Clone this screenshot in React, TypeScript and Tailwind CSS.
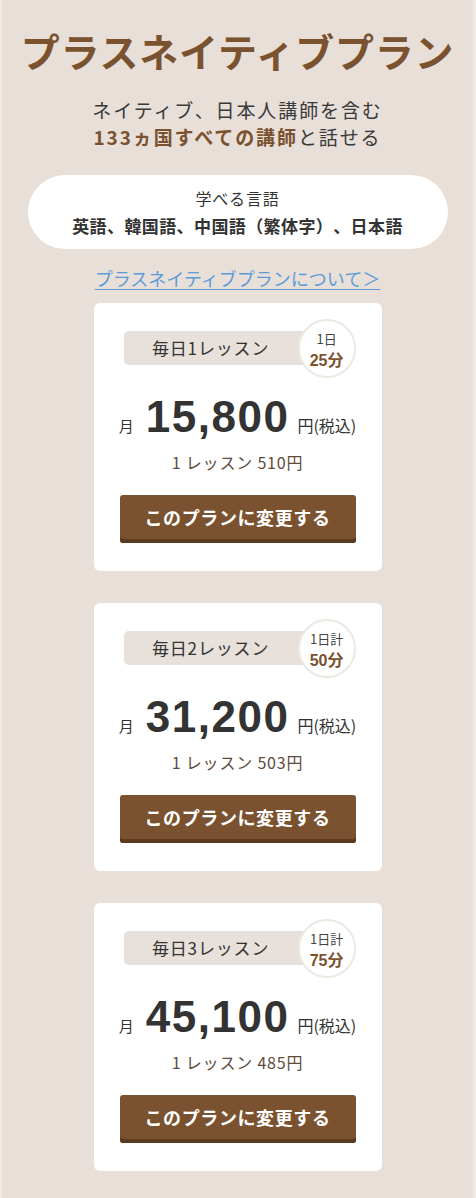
import React from "react";

const jp = { fontFamily: '"Noto Sans CJK JP", "Noto Sans", sans-serif' };
const num = { fontFamily: '"Liberation Sans", Arial, "Noto Sans CJK JP", sans-serif' };

type Plan = { n: string; day: string; min: string; price: string; per: string };

const plans: Plan[] = [
  { n: "1", day: "1日", min: "25", price: "15,800", per: "510円" },
  { n: "2", day: "1日計", min: "50", price: "31,200", per: "503円" },
  { n: "3", day: "1日計", min: "75", price: "45,100", per: "485円" },
];

function Card({ p }: { p: Plan }) {
  return (
    <div className="w-[288px] h-[268px] bg-white rounded-[6px] flex flex-col items-center pt-[16px]">
      <div className="w-[236px] h-[58px] flex items-center pl-[4px]">
        <div className="w-[207px] h-[34px] bg-[#e8e0da] rounded-[5px] pr-[29px] flex items-center justify-center text-[17px] tracking-[0.05em] text-[#333]">
          毎日{p.n}レッスン
        </div>
        <div className="-ml-[29px] w-[59px] h-[59px] rounded-full bg-white border-2 border-[#eee8e3] flex flex-col items-center justify-center pt-[5px]">
          <span className="text-[13px] leading-[19px] text-[#444]">{p.day}</span>
          <span className="text-[16px] leading-[22px] font-bold text-[#7a5230]">
            <span style={num}>{p.min}</span>
            <span>分</span>
          </span>
        </div>
      </div>
      <div className="mt-[15px] flex items-baseline text-[#333] h-[50px]">
        <span className="text-[15px] mr-[12px]">月</span>
        <span className="text-[44px] font-bold tracking-[1.5px] leading-[50px]" style={num}>
          {p.price}
        </span>
        <span className="text-[16px] ml-[8px]">円(税込)</span>
      </div>
      <div className="mt-[8px] text-[16px] leading-[24px] tracking-[0.05em] text-[#5e4b3c]">
        1 レッスン {p.per}
      </div>
      <button className="mt-[21px] w-[236px] h-[48px] rounded-[3px] bg-[#7a5230] shadow-[inset_0_-4px_0_#5a3b1f] text-white font-bold text-[18px] tracking-[0.6px] pb-[3px]">
        このプランに変更する
      </button>
    </div>
  );
}

export default function App() {
  return (
    <div
      className="min-h-[1198px] bg-[#e8dfd9] border-l-[2px] border-r-[3px] border-[#efe9e5] flex flex-col items-center [text-spacing-trim:space-all]"
      style={jp}
    >
      <h1 className="mt-[26px] text-[39px] leading-[48px] font-bold text-[#7a5230] tracking-[0.02em]">
        プラスネイティブプラン
      </h1>
      <p className="mt-[22px] text-center text-[19px] leading-[27px] tracking-[0.1em] text-[#3a3a3a]">
        ネイティブ、日本人講師を含む
        <br />
        <span className="font-bold text-[#7a5230]">133ヵ国すべての講師</span>と話せる
      </p>
      <div className="mt-[25px] w-[420px] h-[74px] bg-white rounded-full flex flex-col items-center justify-center text-[#333]">
        <div className="text-[16px] leading-[28px] tracking-[0.05em]">学べる言語</div>
        <div className="text-[17px] leading-[28px] font-bold tracking-[0.4px]">英語、韓国語、中国語（繁体字）、日本語</div>
      </div>
      <a
        href="#"
        className="mt-[17px] text-[18px] leading-[24px] text-[#5b9bd8] underline underline-offset-[3px]"
      >
        プラスネイティブプランについて＞
      </a>
      <div className="mt-[13px] flex flex-col gap-[32px]">
        {plans.map((p) => (
          <Card key={p.n} p={p} />
        ))}
      </div>
    </div>
  );
}
